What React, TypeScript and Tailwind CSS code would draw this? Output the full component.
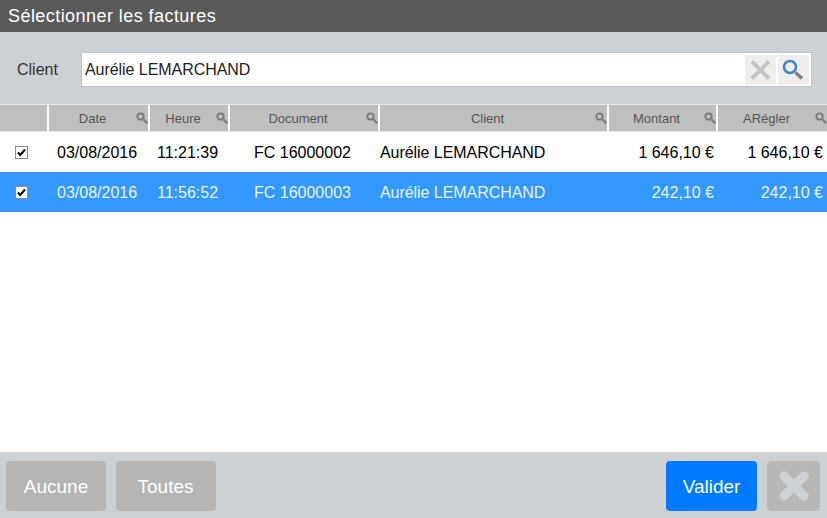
const columns = [
  { label: "Date", width: "w-[101px]" },
  { label: "Heure", width: "w-[80px]" },
  { label: "Document", width: "w-[150px]" },
  { label: "Client", width: "w-[229px]" },
  { label: "Montant", width: "w-[109px]" },
  { label: "ARégler", width: "flex-1" },
];

const rows = [
  { date: "03/08/2016", time: "11:21:39", doc: "FC 16000002", client: "Aurélie LEMARCHAND", amount: "1 646,10 €", due: "1 646,10 €", selected: false },
  { date: "03/08/2016", time: "11:56:52", doc: "FC 16000003", client: "Aurélie LEMARCHAND", amount: "242,10 €", due: "242,10 €", selected: true },
];

function SmallSearch() {
  return (
    <svg className="absolute right-0 top-[7px]" width="12" height="12" viewBox="0 0 12 12" fill="none">
      <circle cx="4.5" cy="4.5" r="3.2" stroke="#777" strokeWidth="1.8" />
      <path d="M7.5 7.5l3.8 3.8" stroke="#808080" strokeWidth="2.4" />
    </svg>
  );
}

function Check() {
  return (
    <div className="flex h-[13px] w-[13px] items-center justify-center border border-[#8a8a8a] bg-white">
      <svg width="9" height="9" viewBox="0 0 9 9" fill="none">
        <path d="M1 4.5l2.3 2.5L8 1.5" stroke="#000" strokeWidth="2" />
      </svg>
    </div>
  );
}

function InvoiceRow({ row }: { row: (typeof rows)[number] }) {
  return (
    <div className={`flex h-10 items-center text-base ${row.selected ? "bg-[#3399ff] text-[#eaf4ff]" : "bg-white text-black"}`}>
      <div className="flex w-[49px] pl-[15px]">
        <Check />
      </div>
      <div className="w-[101px] pl-[8px] pt-[2px]">{row.date}</div>
      <div className="w-[80px] pl-[7px] pt-[2px]">{row.time}</div>
      <div className="w-[150px] pl-[24px] pt-[2px]">{row.doc}</div>
      <div className="w-[229px] pt-[2px] tracking-[-0.05px]">{row.client}</div>
      <div className="w-[109px] pr-[4px] pt-[2px] text-right">{row.amount}</div>
      <div className="flex-1 pr-[4px] pt-[2px] text-right">{row.due}</div>
    </div>
  );
}

export default function App() {
  return (
    <div className="flex h-[518px] w-[827px] flex-col overflow-hidden bg-white font-['Liberation_Sans',Arial,sans-serif]">
      <div className="flex h-8 items-center bg-[#5a5a5a] pl-2 text-lg tracking-[0.44px] text-white">
        Sélectionner les factures
      </div>

      <div className="flex h-[72px] items-start bg-[#ced1d4] pt-5">
        <div className="w-[81px] pl-[17px] pt-[8px] text-base leading-5 text-[#333]">Client</div>
        <div className="flex h-[35px] w-[731px] items-center justify-between border border-[#b9c4d0] bg-white pl-[3px] pr-[2px]">
          <span className="text-base tracking-[-0.05px] text-[#222]">Aurélie LEMARCHAND</span>
          <div className="flex gap-[2px]">
            <div className="h-[30px] w-[31px] bg-[#eeeeee]">
              <svg width="31" height="30" viewBox="0 0 31 30" fill="none">
                <path d="M7 6.5l17 17M24 6.5L7 23.5" stroke="#c4c4c4" strokeWidth="4" />
              </svg>
            </div>
            <div className="h-[30px] w-[31px] bg-[#eeeeee]">
              <svg width="31" height="30" viewBox="0 0 31 30" fill="none">
                <circle cx="12" cy="12" r="6" stroke="#3f86c4" strokeWidth="2.5" />
                <path d="M17.5 17.5l6.5 6" stroke="#808080" strokeWidth="3.5" />
              </svg>
            </div>
          </div>
        </div>
      </div>

      <div className="flex h-[28px] items-stretch border-y border-[#e8e8e8] bg-white text-[13px] text-[#555]">
        <div className="w-[47px] bg-[#bfbfbf]" />
        {columns.map((col) => (
          <div key={col.label} className={`${col.width} border-l-2 border-white`}>
            <div className="relative flex h-full items-center justify-center bg-[#bfbfbf] pr-[12px] pt-[1px]">
              {col.label}
              <SmallSearch />
            </div>
          </div>
        ))}
      </div>

      <div className="flex-1 bg-white">
        {rows.map((row) => (
          <InvoiceRow key={row.doc} row={row} />
        ))}
      </div>

      <div className="flex h-[66px] items-center justify-between bg-[#ced1d4] pl-[6px] pr-[7px] pt-[1px] text-[19px]">
        <div className="flex gap-[10px]">
          <button type="button" className="h-[50px] w-[100px] rounded-[4px] bg-[#b5b5b5] pt-[4px] text-white">Aucune</button>
          <button type="button" className="h-[50px] w-[100px] rounded-[4px] bg-[#b5b5b5] pr-[1px] pt-[4px] text-white">Toutes</button>
        </div>
        <div className="flex gap-[10px]">
          <button type="button" className="h-[50px] w-[91px] rounded-[4px] bg-[#007bff] pt-[4px] text-white">Valider</button>
          <button type="button" className="flex h-[50px] w-[53px] items-center justify-center rounded-[4px] bg-[#b8b8b8]">
            <svg width="34" height="34" viewBox="0 0 34 34" fill="none">
              <path d="M7 7l20 20M27 7L7 27" stroke="#cfd2d4" strokeWidth="9" strokeLinecap="round" />
            </svg>
          </button>
        </div>
      </div>
    </div>
  );
}
